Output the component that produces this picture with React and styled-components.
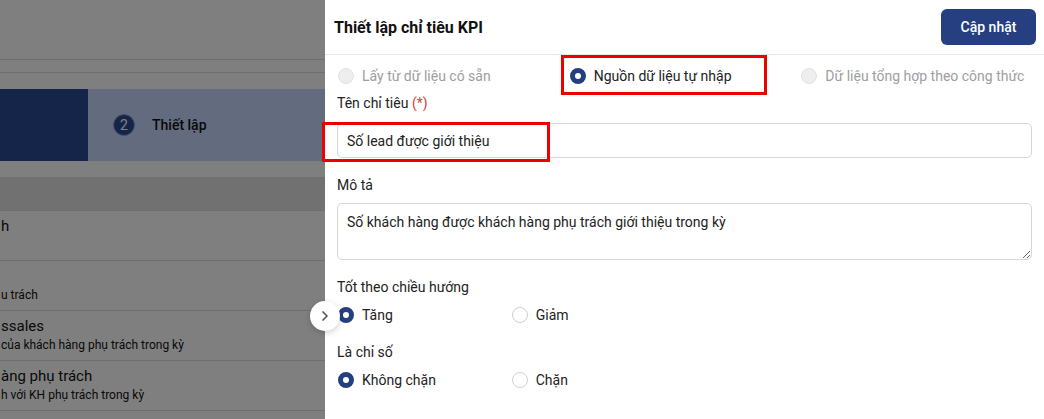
import React from "react";
import styled, { createGlobalStyle } from "styled-components";
import { ChevronRight } from "lucide-react";

const GlobalStyle = createGlobalStyle`
  * { box-sizing: border-box; }
  body {
    margin: 0;
    font-family: Roboto, "Liberation Sans", sans-serif;
    color: #222;
    background: #fff;
  }
`;

const Screen = styled.div`
  position: relative;
  width: 100vw;
  height: 100vh;
  overflow: hidden;
`;

// ---- trang phía sau (bị che bởi mask) ----
const Page = styled.div`
  width: 100%;
  height: 100%;
  background: #fff;
`;

const TopBar = styled.div`
  height: 60px;
  border-bottom: 1px solid #dcdcdc;
`;

const SubBar = styled.div`
  height: 13px;
  border-bottom: 1px solid #dcdcdc;
`;

const Steps = styled.div`
  display: flex;
  height: 72px;
  margin-top: 16px;
  background: #c6d6fe;
`;

const Step = styled.div`
  display: flex;
  align-items: center;
  gap: 17px;
  width: ${(p) => (p.$active ? "88px" : "auto")};
  padding-left: ${(p) => (p.$active ? "0" : "25px")};
  background: ${(p) => (p.$active ? "#2a4a94" : "transparent")};
  font-size: 14px;
  font-weight: 500;
  color: #111;
`;

const StepNumber = styled.span`
  display: inline-flex;
  align-items: center;
  justify-content: center;
  width: 22px;
  height: 22px;
  border-radius: 50%;
  background: #2a4a94;
  border: 1px solid #8ea0cc;
  color: #fff;
  font-size: 14px;
  font-weight: 400;
`;

const Table = styled.div`
  margin-top: 16px;
`;

const TableHead = styled.div`
  height: 34px;
  background: #e3e3e3;
  border-bottom: 1px solid #dcdcdc;
`;

const Row = styled.div`
  height: 50px;
  border-bottom: 1px solid #dcdcdc;
  padding-top: 5px;
  padding-left: 1px;
`;

const RowTitle = styled.div`
  height: 20px;
  line-height: 20px;
  font-size: 15px;
  color: #111;
  white-space: nowrap;
`;

const RowSub = styled.div`
  line-height: 18px;
  font-size: 12px;
  color: #111;
  white-space: nowrap;
`;

const Mask = styled.div`
  position: absolute;
  inset: 0;
  background: rgba(0, 0, 0, 0.5);
`;

// ---- drawer ----
const Drawer = styled.aside`
  position: absolute;
  top: 0;
  right: 0;
  bottom: 0;
  width: 719px;
  background: #fff;
`;

const CollapseButton = styled.button`
  position: absolute;
  left: -15px;
  top: 301px;
  width: 30px;
  height: 30px;
  border: none;
  border-radius: 50%;
  background: #fff;
  box-shadow: 0 2px 6px rgba(0, 0, 0, 0.18);
  display: flex;
  align-items: center;
  justify-content: center;
  padding: 0;
  color: #555;
  z-index: 2;
`;

const DrawerHeader = styled.header`
  height: 55px;
  display: flex;
  align-items: center;
  justify-content: space-between;
  padding: 0 8px 0 9px;
  border-bottom: 1px solid #e6e6e6;
`;

const DrawerTitle = styled.h2`
  margin: 0;
  font-size: 16px;
  font-weight: 700;
  color: #111;
`;

const PrimaryButton = styled.button`
  height: 36px;
  width: 95px;
  margin-top: -1px;
  border: none;
  border-radius: 6px;
  background: #253f80;
  color: #fff;
  font-family: inherit;
  font-size: 14px;
  font-weight: 500;
`;

const DrawerBody = styled.div`
  padding: 11px 12px 0 12px;
`;

const OptionGrid = styled.div`
  display: grid;
  grid-template-columns: repeat(${(p) => p.$cols}, 1fr);
  height: 20px;
  margin-top: ${(p) => p.$top || 0}px;
`;

const Option = styled.label`
  position: relative;
  display: flex;
  align-items: center;
  gap: 8px;
  padding-left: 1px;
  font-size: 14px;
  color: ${(p) => (p.$disabled ? "#9e9e9e" : "#222")};
  white-space: nowrap;
`;

const Dot = styled.span`
  width: 16px;
  height: 16px;
  border-radius: 50%;
  flex: none;
  background: ${(p) => (p.$disabled ? "#eeeeee" : "#fff")};
  border: ${(p) =>
    p.$checked ? "5px solid #25407f" : `1px solid ${p.$disabled ? "#e2e2e2" : "#cfcfcf"}`};
`;

const Highlight = styled.span`
  position: absolute;
  left: ${(p) => p.$left}px;
  top: ${(p) => p.$top}px;
  width: ${(p) => p.$w}px;
  height: ${(p) => p.$h}px;
  border: 3px solid #ee0000;
  pointer-events: none;
`;

const FieldLabel = styled.div`
  height: 20px;
  line-height: 20px;
  font-size: 14px;
  color: #222;
  margin-top: ${(p) => p.$top}px;
  margin-bottom: ${(p) => p.$bottom}px;
`;

const Required = styled.span`
  color: #e53935;
`;

const InputWrap = styled.div`
  position: relative;
`;

const TextInput = styled.input`
  display: block;
  width: 100%;
  height: 35px;
  padding: 0 9px;
  border: 1px solid #d6d6d6;
  border-radius: 5px;
  font-family: inherit;
  font-size: 14px;
  color: #222;
  outline: none;
`;

const TextArea = styled.textarea`
  display: block;
  width: 100%;
  height: 57px;
  padding: 8px 9px;
  border: 1px solid #d6d6d6;
  border-radius: 5px;
  font-family: inherit;
  font-size: 14px;
  line-height: 20px;
  color: #222;
  resize: vertical;
  outline: none;
`;

function Radio({ checked, disabled, children, highlight }) {
  return (
    <Option $disabled={disabled}>
      <Dot $checked={checked} $disabled={disabled} />
      {children}
      {highlight && <Highlight {...highlight} />}
    </Option>
  );
}

const rows = [
  { title: "h", sub: "" },
  { title: "", sub: "u trách" },
  { title: "ssales", sub: "của khách hàng phụ trách trong kỳ" },
  { title: "àng phụ trách", sub: "h với KH phụ trách trong kỳ" },
];

export default function App() {
  return (
    <Screen>
      <GlobalStyle />
      <Page>
        <TopBar />
        <SubBar />
        <Steps>
          <Step $active />
          <Step>
            <StepNumber>2</StepNumber>
            Thiết lập
          </Step>
        </Steps>
        <Table>
          <TableHead />
          {rows.map((r, i) => (
            <Row key={i}>
              <RowTitle>{r.title}</RowTitle>
              <RowSub>{r.sub}</RowSub>
            </Row>
          ))}
        </Table>
      </Page>
      <Mask />
      <Drawer>
        <CollapseButton>
          <ChevronRight size={16} strokeWidth={2.5} />
        </CollapseButton>
        <DrawerHeader>
          <DrawerTitle>Thiết lập chỉ tiêu KPI</DrawerTitle>
          <PrimaryButton>Cập nhật</PrimaryButton>
        </DrawerHeader>
        <DrawerBody>
          <OptionGrid $cols={3}>
            <Radio disabled>Lấy từ dữ liệu có sẵn</Radio>
            <Radio checked highlight={{ $left: -8, $top: -11, $w: 206, $h: 40 }}>
              Nguồn dữ liệu tự nhập
            </Radio>
            <Radio disabled>Dữ liệu tổng hợp theo công thức</Radio>
          </OptionGrid>

          <FieldLabel $top={7} $bottom={10}>
            Tên chỉ tiêu <Required>(*)</Required>
          </FieldLabel>
          <InputWrap>
            <TextInput defaultValue="Số lead được giới thiệu" />
            <Highlight $left={-15} $top={-1} $w={228} $h={40} />
          </InputWrap>

          <FieldLabel $top={17} $bottom={8}>Mô tả</FieldLabel>
          <TextArea defaultValue="Số khách hàng được khách hàng phụ trách giới thiệu trong kỳ" />

          <FieldLabel $top={17} $bottom={8}>Tốt theo chiều hướng</FieldLabel>
          <OptionGrid $cols={4}>
            <Radio checked>Tăng</Radio>
            <Radio>Giảm</Radio>
          </OptionGrid>

          <FieldLabel $top={17} $bottom={8}>Là chỉ số</FieldLabel>
          <OptionGrid $cols={4}>
            <Radio checked>Không chặn</Radio>
            <Radio>Chặn</Radio>
          </OptionGrid>
        </DrawerBody>
      </Drawer>
    </Screen>
  );
}
